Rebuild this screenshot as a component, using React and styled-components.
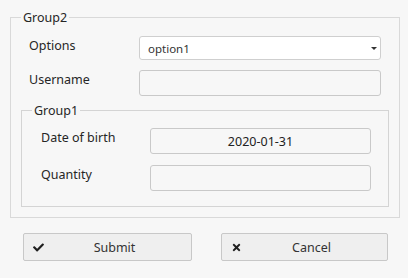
import React from "react";
import styled, { createGlobalStyle } from "styled-components";
import { FaCheck, FaTimes } from "react-icons/fa";

const GlobalStyle = createGlobalStyle`
  html, body { margin: 0; padding: 0; background: #f7f7f7; }
  body {
    font-family: "Noto Sans", "Open Sans", sans-serif;
    font-size: 12.5px;
    color: #262626;
  }
  * { box-sizing: border-box; }
`;

const Page = styled.div`
  width: 408px;
  height: 278px;
  padding: 9px 0 0 10px;
  background: #f7f7f7;
`;

const Group = styled.fieldset`
  margin: 0;
  min-width: 0;
  width: ${(p) => p.$width};
  border: 1px solid ${(p) => (p.$inner ? "#d4d4d4" : "#d9d9d9")};
  padding: ${(p) => p.$padding};
`;

const Legend = styled.legend`
  padding: 0 2px;
  font-size: 12.5px;
  line-height: 17px;
  color: #262626;
`;

const Rows = styled.div`
  display: flex;
  flex-direction: column;
  gap: ${(p) => p.$gap}px;
  padding: 0 ${(p) => p.$right}px 0 ${(p) => p.$left}px;
`;

const Row = styled.div`
  display: flex;
  align-items: flex-start;
`;

const Label = styled.div`
  flex: 0 0 ${(p) => p.$w}px;
  line-height: 17px;
  padding-top: 1px;
  font-size: 12.5px;
`;

const SelectBox = styled.div`
  flex: 1;
  height: 24px;
  display: flex;
  align-items: center;
  justify-content: space-between;
  padding: 0 3px 0 8px;
  background: #fff;
  border: 1px solid #cfcfcf;
  border-radius: 3px;
  font-size: 11.5px;
  color: #333;
`;

const Arrow = styled.svg`
  width: 6px;
  height: 3px;
`;

const TextBox = styled.div`
  flex: 1;
  height: 26px;
  display: flex;
  align-items: center;
  justify-content: center;
  background: #f7f7f7;
  border: 1px solid #c9c9c9;
  border-radius: 3px;
  font-size: 12.5px;
  color: #222;
`;

const InnerWrap = styled.div`
  margin-top: 6px;
`;

const ButtonRow = styled.div`
  display: grid;
  grid-template-columns: 169px 167px;
  column-gap: 29px;
  margin: 15px 0 0 13px;
`;

const Button = styled.button`
  height: 28px;
  display: grid;
  grid-template-columns: 14px 1fr;
  align-items: center;
  padding: 0 7px;
  margin: 0;
  background: #efefef;
  border: 1px solid #c8c8c8;
  border-radius: 2px;
  font-family: inherit;
  font-size: 12.5px;
  color: #333;
  cursor: pointer;
`;

const IconCell = styled.span`
  display: flex;
  justify-content: center;
  align-items: center;
  color: #1f1f1f;
`;

const ButtonText = styled.span`
  text-align: center;
`;

export default function App() {
  return (
    <>
      <GlobalStyle />
      <Page>
        <Group $width="390px" $padding="10px 10px 10px 10px">
          <Legend>Group2</Legend>
          <Rows $gap={10} $left={8} $right={8}>
            <Row>
              <Label $w={110}>Options</Label>
              <SelectBox>
                <span>option1</span>
                <Arrow viewBox="0 0 6 3">
                  <polygon points="0,0 6,0 3,3" fill="#333" />
                </Arrow>
              </SelectBox>
            </Row>
            <Row>
              <Label $w={110}>Username</Label>
              <TextBox />
            </Row>
          </Rows>
          <InnerWrap>
            <Group $inner $width="368px" $padding="9px 17px 15px 10px">
              <Legend>Group1</Legend>
              <Rows $gap={11} $left={9} $right={0}>
                <Row>
                  <Label $w={109}>Date of birth</Label>
                  <TextBox>2020-01-31</TextBox>
                </Row>
                <Row>
                  <Label $w={109}>Quantity</Label>
                  <TextBox />
                </Row>
              </Rows>
            </Group>
          </InnerWrap>
        </Group>
        <ButtonRow>
          <Button>
            <IconCell>
              <FaCheck size={11} />
            </IconCell>
            <ButtonText>Submit</ButtonText>
          </Button>
          <Button>
            <IconCell>
              <FaTimes size={11} />
            </IconCell>
            <ButtonText>Cancel</ButtonText>
          </Button>
        </ButtonRow>
      </Page>
    </>
  );
}
